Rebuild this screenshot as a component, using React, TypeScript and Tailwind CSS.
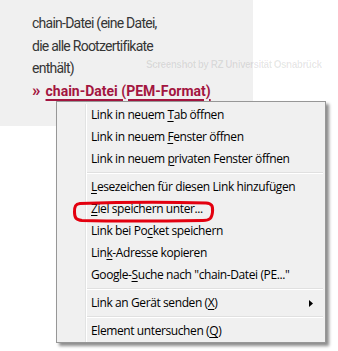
import React from "react";

const U = ({ children }: { children: React.ReactNode }) => (
  <span className="underline underline-offset-[2px] decoration-[1px]">{children}</span>
);

type Item =
  | { kind: "sep" }
  | { kind: "item"; label: React.ReactNode; sub?: boolean };

const items: Item[] = [
  { kind: "item", label: <>Link in neuem <U>T</U>ab öffnen</> },
  { kind: "item", label: <>Link in neuem <U>F</U>enster öffnen</> },
  { kind: "item", label: <>Link in neuem <U>p</U>rivaten Fenster öffnen</> },
  { kind: "sep" },
  { kind: "item", label: <><U>L</U>esezeichen für diesen Link hinzufügen</> },
  { kind: "item", label: <><U>Z</U>iel speichern unter...</> },
  { kind: "item", label: <>Link bei Po<U>c</U>ket speichern</> },
  { kind: "item", label: <>Lin<U>k</U>-Adresse kopieren</> },
  { kind: "item", label: <>Google-<U>S</U>uche nach "chain-Datei (PE..."</> },
  { kind: "sep" },
  { kind: "item", label: <>Link an Gerät senden (<U>X</U>)</>, sub: true },
  { kind: "sep" },
  { kind: "item", label: <>Element untersuchen (<U>Q</U>)</> },
];

export default function App() {
  return (
    <div className="relative w-[338px] h-[351px] bg-white overflow-hidden">
      <div
        className="w-[253px] h-[126px] bg-[#f0f0f0] pl-[32px] pt-[12px] text-[14px] leading-[22.5px] text-[#353535]"
        style={{ fontFamily: "Roboto, 'Open Sans', sans-serif" }}
      >
        <div className="tracking-[-0.75px]">chain-Datei (eine Datei,</div>
        <div className="tracking-[-0.75px]">die alle Rootzertifikate</div>
        <div className="tracking-[-0.75px]">enthält)</div>
        <div className="flex items-center text-[#a3153f] font-bold">
          <span className="mr-[5px] text-[17px] leading-none">»</span>
          <span className="underline decoration-[2px] underline-offset-[3px]">chain-Datei (PEM-Format)</span>
        </div>
      </div>

      <div
        className="absolute left-[146px] top-[57px] text-[10px] font-bold tracking-[-0.5px] text-black/10 whitespace-nowrap"
        style={{ fontFamily: "'Liberation Sans', Arial, sans-serif" }}
      >
        Screenshot by RZ Universität Osnabrück
      </div>

      <div
        className="absolute left-[56px] top-[101px] w-[270px] h-[242px] bg-[#f0f0f0] border border-[#979797] shadow-[3px_3px_3px_rgba(0,0,0,0.45)] flex pt-[2px] pl-[2px] text-[12px] text-black"
        style={{ fontFamily: "'Open Sans', 'Noto Sans', sans-serif" }}
      >
        <div className="w-[27px] border-r border-[#e2e3e3] shrink-0" />
        <div className="flex-1 flex flex-col border-l border-white">
          {items.map((it, i) =>
            it.kind === "sep" ? (
              <div key={i} className="h-[6px] flex flex-col justify-center pr-[2px]">
                <div className="h-px bg-[#e0e0e0]" />
                <div className="h-px bg-white" />
              </div>
            ) : (
              <div key={i} className="h-[22px] flex items-center pl-[4px] pr-[12px] whitespace-nowrap">
                <span className="flex-1 tracking-[-0.4px]">{it.label}</span>
                {it.sub && (
                  <svg width="4" height="7" viewBox="0 0 4 7">
                    <path d="M0 0 L4 3.5 L0 7 Z" fill="#000" />
                  </svg>
                )}
              </div>
            )
          )}
        </div>
      </div>

      <svg className="absolute left-0 top-0" width="338" height="351" viewBox="0 0 338 351">
        <path
          d="M80 203.5 C110 202.5 170 202 206 203 C212 203.5 213 206 212.5 212 C212 218 210 220.5 203 220.5 C170 221 120 221.5 82 220.5 C76 220 74.5 218 74.5 212 C74.5 206 75.5 204 80 203.5 Z"
          fill="none"
          stroke="#e3000f"
          strokeWidth="3"
        />
      </svg>
    </div>
  );
}
